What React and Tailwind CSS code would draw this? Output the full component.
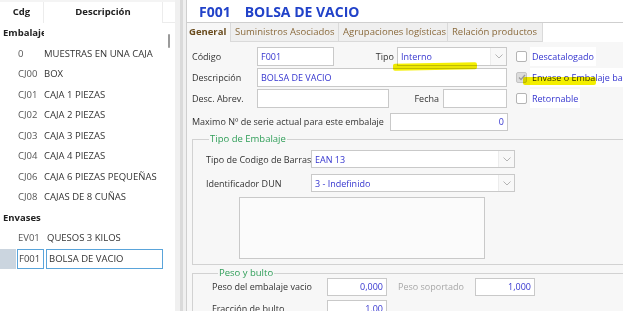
import React from 'react';

const rows = [
  { group: 'Embalaje' },
  { cdg: '0', desc: 'MUESTRAS EN UNA CAJA' },
  { cdg: 'CJ00', desc: 'BOX' },
  { cdg: 'CJ01', desc: 'CAJA 1 PIEZAS' },
  { cdg: 'CJ02', desc: 'CAJA 2 PIEZAS' },
  { cdg: 'CJ03', desc: 'CAJA 3 PIEZAS' },
  { cdg: 'CJ04', desc: 'CAJA 4 PIEZAS' },
  { cdg: 'CJ06', desc: 'CAJA 6 PIEZAS PEQUEÑAS' },
  { cdg: 'CJ08', desc: 'CAJAS DE 8 CUÑAS' },
  { group: 'Envases' },
  { cdg: 'EV01', desc: 'QUESOS 3 KILOS', shift: true },
  { cdg: 'F001', desc: 'BOLSA DE VACIO', selected: true },
];

const Chevron = () => (
  <svg width="8" height="5" viewBox="0 0 8 5" fill="none">
    <path d="M0.5 0.5 L4 4 L7.5 0.5" stroke="#b4b4b4" strokeWidth="1" />
  </svg>
);

const Select = ({ value, className }) => (
  <div className={`flex shrink-0 border border-[#c9c9c9] bg-white ${className}`}>
    <div className="flex-1 flex items-center pl-[3px] text-[#3535cf]">{value}</div>
    <div className="w-[16px] flex items-center justify-center border-l border-[#ececec] bg-[#f8f8f8]">
      <Chevron />
    </div>
  </div>
);

const Input = ({ value, className, right }) => (
  <div className={`flex shrink-0 items-center border border-[#c9c9c9] bg-white px-[3px] text-[#3535cf] ${right ? 'justify-end' : ''} ${className}`}>
    {value}
  </div>
);

const Check = ({ label, checked, className }) => (
  <div className={`flex shrink-0 items-center h-[19px] ${className}`}>
    <div className={`w-[11px] h-[11px] shrink-0 rounded-[2px] border flex items-center justify-center ${checked ? 'bg-[#dcdcdc] border-[#c4c4c4]' : 'bg-white border-[#b4b4b4]'}`}>
      {checked && (
        <svg width="8" height="7" viewBox="0 0 8 7" fill="none">
          <path d="M1 3.5 L3 5.5 L7 1" stroke="#9a9a9a" strokeWidth="1.3" />
        </svg>
      )}
    </div>
    <div className="ml-[3px] h-full flex items-center bg-white px-[2px] text-[#3535cf] whitespace-nowrap">{label}</div>
  </div>
);

export default function App() {
  return (
    <div className="relative w-[623px] h-[311px] overflow-hidden bg-white flex font-['Open_Sans',sans-serif] text-[9px] text-[#333]">
      {/* lista */}
      <div className="w-[175px] shrink-0 flex flex-col bg-white">
        <div className="h-[2px] bg-[#f4f4f4]" />
        <div className="flex h-[21px] font-bold text-[#222] text-[9.5px]">
          <div className="w-[44px] flex items-center justify-center border-r border-[#ececec]">Cdg</div>
          <div className="w-[119px] flex items-center justify-center border-r border-[#ececec]">Descripción</div>
          <div className="w-[12px] border-b border-[#ececec]" />
        </div>
        <div className="flex flex-1">
          <div className="w-[163px] flex flex-col text-[9.5px]">
            {rows.map((r, i) =>
              r.group ? (
                <div key={i} className="h-[20.5px] flex items-center">
                  <div className="w-[44px] overflow-hidden whitespace-nowrap pl-[3px] font-bold text-[#222]">{r.group}</div>
                </div>
              ) : r.selected ? (
                <div key={i} className="h-[20.5px] flex items-stretch">
                  <div className="w-[16px] bg-[#cbd5df]" />
                  <div className="w-[27px] ml-[1px] border border-[#5aa4da] flex items-center pl-[1px] text-[#444]">{r.cdg}</div>
                  <div className="w-[117px] ml-[2px] border border-[#5aa4da] flex items-center pl-[2px] text-[#333]">{r.desc}</div>
                </div>
              ) : (
                <div key={i} className="h-[20.5px] flex items-center">
                  <div className="w-[44px] pl-[18px] text-[#555]">{r.cdg}</div>
                  <div className={`whitespace-nowrap ${r.shift ? 'pl-[3px]' : ''}`}>{r.desc}</div>
                </div>
              )
            )}
          </div>
          <div className="w-[12px] bg-white pt-[11px] pl-[5px]">
            <div className="w-[2px] h-[14px] rounded-full bg-[#9a9a9a]" />
          </div>
        </div>
      </div>

      {/* separador */}
      <div className="w-[11px] shrink-0 flex bg-[#f0f0f0]">
        <div className="w-[5px]" />
        <div className="w-[3px] bg-[#dadada]" />
      </div>

      {/* ficha */}
      <div className="flex-1 flex flex-col border-l border-[#cfcfcf] min-w-0">
        <div className="h-[22px] shrink-0 bg-white flex items-center pl-[12px] text-[14px] font-bold text-[#2142c9]">
          <span>F001</span>
          <span className="ml-[14px]">BOLSA DE VACIO</span>
        </div>

        <div className="h-[20px] shrink-0 flex border-t border-[#cfcfcf] bg-white text-[9.5px] text-[#8a6a3c]">
          <div className="w-[44px] flex items-center pl-[2px] bg-[#f7f7f7] border-r border-[#dadada] font-bold text-[#6a4c1e]">General</div>
          <div className="w-[108px] flex items-center pl-[4px] bg-[#efefef] border-r border-[#dadada] border-b">Suministros Asociados</div>
          <div className="w-[109px] flex items-center pl-[4px] bg-[#efefef] border-r border-[#dadada] border-b">Agrupaciones logísticas</div>
          <div className="w-[95px] flex items-center pl-[4px] bg-[#efefef] border-r border-[#dadada] border-b">Relación productos</div>
        </div>

        <div className="flex-1 bg-[#f7f7f7] pl-[5px] pt-[5px]">
          {/* fila 1 */}
          <div className="flex h-[19px]">
            <div className="w-[65px] shrink-0 flex items-center">Código</div>
            <Input value="F001" className="w-[77px] text-[#333]" />
            <div className="w-[63px] shrink-0 flex items-center justify-end pr-[3px]">Tipo</div>
            <Select value="Interno" className="w-[110px]" />
            <Check label="Descatalogado" className="ml-[9px]" />
          </div>
          {/* fila 2 */}
          <div className="flex h-[19px] mt-[2px]">
            <div className="w-[65px] shrink-0 flex items-center">Descripción</div>
            <Input value="BOLSA DE VACIO" className="w-[250px]" />
            <Check label="Envase o Embalaje base" checked className="ml-[9px]" />
          </div>
          {/* fila 3 */}
          <div className="flex h-[19px] mt-[2px]">
            <div className="w-[65px] shrink-0 flex items-center">Desc. Abrev.</div>
            <Input value="" className="w-[132px]" />
            <div className="w-[54px] shrink-0 flex items-center justify-end pr-[4px]">Fecha</div>
            <Input value="" className="w-[64px]" />
            <Check label="Retornable" className="ml-[9px]" />
          </div>
          {/* fila 4 */}
          <div className="flex h-[18px] mt-[5px]">
            <div className="w-[198px] shrink-0 flex items-center whitespace-nowrap">Maximo Nº de serie actual para este embalaje</div>
            <Input value="0" right className="w-[118px]" />
          </div>

          {/* tipo de embalaje */}
          <fieldset className="mt-px border-t border-l border-b border-[#d2d2d2] pl-[13px] pb-[5px]">
            <legend className="ml-[3px] px-[1px] text-[#2f9e58] text-[9.5px]">Tipo de Embalaje</legend>
            <div className="flex h-[18px] mt-[4px]">
              <div className="w-[105px] shrink-0 flex items-center whitespace-nowrap">Tipo de Codigo de Barras</div>
              <Select value="EAN 13" className="w-[204px]" />
            </div>
            <div className="flex h-[18px] mt-[6px]">
              <div className="w-[105px] shrink-0 flex items-center whitespace-nowrap">Identificador DUN</div>
              <Select value="3 - Indefinido" className="w-[204px]" />
            </div>
            <div className="ml-[33px] mt-[5px] w-[246px] h-[62px] border border-[#c9c9c9] bg-[#fbfbfb]" />
          </fieldset>

          {/* peso y bulto */}
          <fieldset className="mt-px border-t border-l border-[#d2d2d2] pl-[19px]">
            <legend className="ml-[6px] px-[1px] text-[#2f9e58] text-[9.5px]">Peso y bulto</legend>
            <div className="flex h-[18px] -mt-[3px]">
              <div className="w-[115px] shrink-0 flex items-center whitespace-nowrap">Peso del embalaje vacio</div>
              <Input value="0,000" right className="w-[60px]" />
              <div className="w-[88px] shrink-0 flex items-center pl-[11px] text-[#a8a8a8] whitespace-nowrap">Peso soportado</div>
              <Input value="1,000" right className="w-[60px]" />
            </div>
            <div className="flex h-[18px] mt-[4px]">
              <div className="w-[115px] shrink-0 flex items-center whitespace-nowrap">Fracción de bulto</div>
              <Input value="1,00" right className="w-[60px]" />
            </div>
          </fieldset>
        </div>
      </div>

      {/* marcas amarillas */}
      <div className="absolute left-[393px] top-[63px] w-[84px] h-[7px] bg-[#f4ef00] mix-blend-multiply -rotate-1 rounded-[2px]" />
      <div className="absolute left-[523px] top-[77px] w-[73px] h-[8px] bg-[#f4ef00] mix-blend-multiply rounded-[2px]" />
    </div>
  );
}
